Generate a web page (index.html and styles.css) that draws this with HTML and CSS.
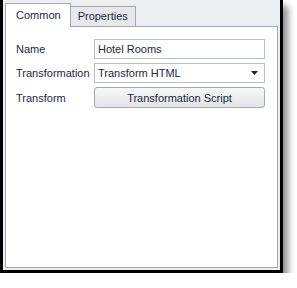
FILE: index.html
```html
<!DOCTYPE html>
<html lang="en">
  <head>
    <meta charset="UTF-8" />
    <title>Transform - Common</title>
    <link rel="stylesheet" href="styles.css">
  </head>
  <body>
    <div class="window">
      <div class="tabs">
        <div class="tab active">Common</div>
        <div class="tab">Properties</div>
      </div>
      <div class="panel">
        <div class="row">
          <label class="label">Name</label>
          <div class="field">Hotel Rooms</div>
        </div>
        <div class="row">
          <label class="label">Transformation</label>
          <div class="field select">
            <span>Transform HTML</span>
            <svg class="arrow" width="7" height="4" viewBox="0 0 7 4"><path d="M0 0h7L3.5 4z" fill="#1e2433"/></svg>
          </div>
        </div>
        <div class="row">
          <label class="label">Transform</label>
          <button class="btn">Transformation Script</button>
        </div>
      </div>
    </div>
  </body>
</html>
```

FILE: styles.css
```css
body {
  margin: 0;
  background-color: #fff;
  font-family: "Liberation Sans", Arial, sans-serif;
  font-size: 11px;
  color: #1b2840;
}

.window {
  width: 273px;
  height: 268px;
  padding: 0 2px 2px 2px;
  background-color: #eceef1;
  border: 3px solid #000;
  border-top: none;
  box-shadow: 5px 6px 7px rgba(0, 0, 0, 0.45);
  display: flex;
  flex-direction: column;
}

.tabs {
  height: 26px;
  display: flex;
  align-items: flex-end;
}

.tab {
  height: 19px;
  padding: 0 7px 0 7px;
  line-height: 19px;
  background-color: #e6e8ec;
  border: 1px solid #a2a7b1;
  border-bottom: none;
  margin-left: -1px;
}

.tab.active {
  height: 23px;
  line-height: 23px;
  padding: 0 9px 0 10px;
  margin-left: 0;
  background-color: #fff;
  margin-bottom: -1px;
  position: relative;
  z-index: 1;
}

.panel {
  flex: 1;
  background-color: #fff;
  border: 1px solid #a2a7b1;
  padding: 12px 12px 0 10px;
  display: flex;
  flex-direction: column;
  gap: 4px;
}

.row {
  display: flex;
  align-items: center;
}

.label {
  width: 78px;
  flex-shrink: 0;
}

.field {
  flex: 1;
  height: 18px;
  line-height: 18px;
  padding: 0 3px;
  border: 1px solid #b9bdc5;
  background-color: #fff;
}

.select {
  display: flex;
  justify-content: space-between;
  align-items: center;
}

.arrow {
  margin-right: 3px;
}

.btn {
  flex: 1;
  height: 21px;
  font-family: inherit;
  font-size: 11px;
  color: #1b2840;
  border: 1px solid #a5aab3;
  border-radius: 3px;
  background: linear-gradient(#f8f8f9, #e3e4e7);
  padding: 0;
}
```
